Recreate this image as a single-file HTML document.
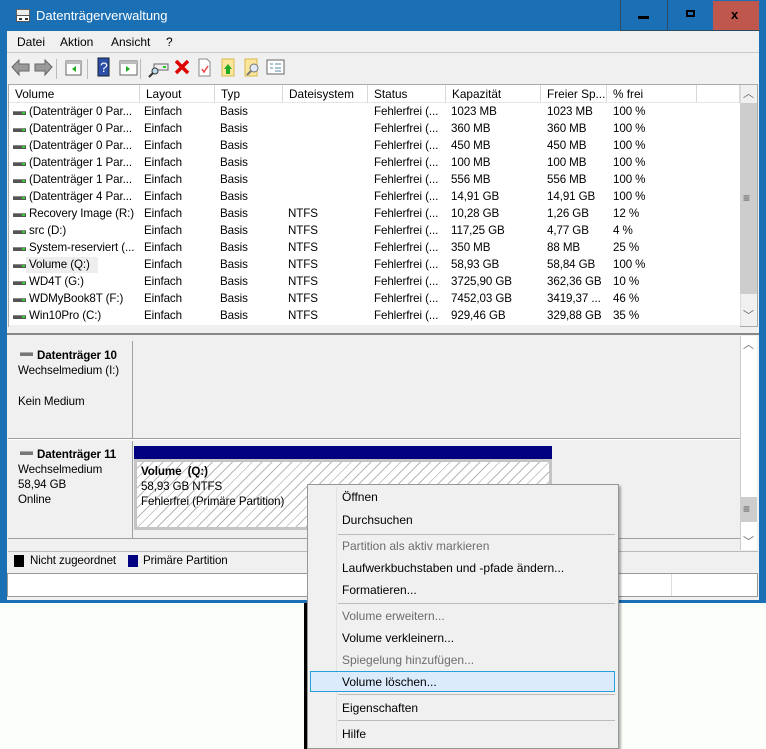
<!DOCTYPE html>
<html><head><meta charset="utf-8"><style>
*{margin:0;padding:0;box-sizing:border-box}
body{width:766px;height:749px;position:relative;background:#fcfefb;font-family:"Liberation Sans",sans-serif;font-size:12px;color:#000;overflow:hidden}
.a{position:absolute}
.t{position:absolute;white-space:nowrap;line-height:14px}
.r{font-size:11.6px;letter-spacing:-0.1px}
.hd{position:absolute;top:85px;height:18px;background:#fff;border-right:1px solid #d8d8d8;border-left:1px solid #fff;padding-left:5px;line-height:18px;border-bottom:1px solid #e5e5e5;overflow:hidden;white-space:nowrap;font-size:11.8px}
.di{position:absolute;width:13px;height:4px;background:#555;border-top:1px solid #888}
.di:after{content:"";position:absolute;right:1px;top:0;width:3px;height:2px;background:#3c3}
.mi{position:absolute;left:342px;font-size:12px}
.dis{color:#6d6d6d}
.sep{position:absolute;left:338px;width:277px;height:1px;background:#bcbcbc}
</style></head><body>
<div class="a" style="left:0;top:0;width:766px;height:603px;background:#1a6fb5"></div>
<div class="a" style="left:620px;top:0;width:46px;height:31px;border-left:1px solid #2d4a63"></div>
<div class="a" style="left:667px;top:0;width:46px;height:31px;border-left:1px solid #2d4a63"></div>
<div class="a" style="left:713px;top:1px;width:46px;height:29px;background:#c0574f"></div>
<div class="a" style="left:620px;top:30px;width:140px;height:1px;background:#2d4a63"></div>
<div class="a" style="left:638px;top:16px;width:11px;height:3px;background:#000"></div>
<div class="a" style="left:686px;top:10px;width:9px;height:7px;border:2px solid #000"></div>
<div class="t" style="left:731px;top:8px;font-weight:bold;font-size:13px">x</div>
<div class="a" style="left:16px;top:9px;width:14px;height:7px;background:#eee;border:1px solid #666"></div>
<div class="a" style="left:16px;top:15px;width:14px;height:7px;background:#fff;border:1px solid #555"></div>
<div class="a" style="left:19px;top:18px;width:3px;height:2px;background:#333"></div>
<div class="a" style="left:25px;top:18px;width:3px;height:2px;background:#333"></div>
<div class="t" style="left:36px;top:9px;color:#fff;font-size:13px">Datenträgerverwaltung</div>
<div class="a" style="left:7px;top:31px;width:752px;height:569px;background:#f0f0f0"></div>
<div class="t" style="left:17px;top:35px">Datei</div>
<div class="t" style="left:60px;top:35px">Aktion</div>
<div class="t" style="left:111px;top:35px">Ansicht</div>
<div class="t" style="left:166px;top:35px">?</div>
<div class="a" style="left:7px;top:52px;width:752px;height:1px;background:#c9c9c9"></div>
<svg class="a" style="left:10px;top:55px" width="290" height="26">
<path d="M2 12 L9 5 L9 9 L19 9 L19 16 L9 16 L9 20 Z" fill="#9a9a9a" stroke="#666"/>
<path d="M42 12 L35 5 L35 9 L25 9 L25 16 L35 16 L35 20 Z" fill="#9a9a9a" stroke="#666"/>
<rect x="46" y="4" width="1" height="20" fill="#bbb"/>
<rect x="56" y="6" width="15" height="14" fill="#fff" stroke="#666"/><rect x="56" y="6" width="15" height="3" fill="#bbb"/><path d="M66 11 L62 14 L66 17Z" fill="#2a2"/>
<rect x="77" y="4" width="1" height="20" fill="#bbb"/>
<rect x="88" y="3" width="11" height="18" fill="#2c4fa8" stroke="#123"/><text x="90" y="17" fill="#fff" font-size="14" font-family="Liberation Sans">?</text>
<rect x="110" y="6" width="17" height="14" fill="#fff" stroke="#666"/><rect x="110" y="6" width="17" height="3" fill="#bbb"/><path d="M116 11 L120 14 L116 17Z" fill="#2a2"/>
<rect x="130" y="4" width="1" height="20" fill="#bbb"/>
<rect x="144" y="9" width="14" height="6" fill="#eee" stroke="#666"/><rect x="153" y="11" width="3" height="2" fill="#2c2"/><circle cx="145" cy="16" r="3" fill="#bde" stroke="#333"/><path d="M143 18 L139 22" stroke="#333" stroke-width="2"/>
<path d="M166 6 L178 18 M178 6 L166 18" stroke="#d00" stroke-width="3.5"/>
<path d="M189 4 L197 4 L200 7 L200 21 L189 21 Z" fill="#fff" stroke="#888"/><path d="M192 14 L194 17 L198 11" stroke="#e44" fill="none" stroke-width="1.5"/>
<rect x="212" y="4" width="12" height="17" fill="#fbe79c" stroke="#d8b84a"/><path d="M218 9 L222 14 L220 14 L220 19 L216 19 L216 14 L214 14Z" fill="#2a2"/>
<rect x="235" y="4" width="12" height="17" fill="#fbe79c" stroke="#d8b84a"/><circle cx="244" cy="13" r="4" fill="#dfeaf5" stroke="#777"/><path d="M241 16 L237 20" stroke="#777" stroke-width="2"/>
<rect x="257" y="5" width="17" height="14" fill="#fff" stroke="#666"/><path d="M260 9h3M260 13h3M265 9h6M265 13h6M265 16h6" stroke="#58a"/>
</svg>
<div class="a" style="left:8px;top:84px;width:750px;height:243px;background:#fff;border:1px solid #aaa"></div>
<div class="hd" style="left:9px;width:131px">Volume</div>
<div class="hd" style="left:140px;width:75px">Layout</div>
<div class="hd" style="left:215px;width:68px">Typ</div>
<div class="hd" style="left:283px;width:85px">Dateisystem</div>
<div class="hd" style="left:368px;width:78px">Status</div>
<div class="hd" style="left:446px;width:95px">Kapazität</div>
<div class="hd" style="left:541px;width:66px">Freier Sp...</div>
<div class="hd" style="left:607px;width:90px">% frei</div>
<div class="hd" style="left:697px;width:43px"></div>
<div class="a" style="left:740px;top:85px;width:17px;height:241px;background:#f0f0f0;border-left:1px solid #ddd"></div>
<div class="a" style="left:740px;top:103px;width:17px;height:191px;background:#cdcdcd"></div>
<div class="t" style="left:743px;top:191px;color:#555">≡</div>
<div class="t" style="left:743px;top:87px;color:#666;font-size:11px">︿</div>
<div class="t" style="left:743px;top:309px;color:#666;font-size:11px">﹀</div>
<div id="rows"></div>
<div class="a" style="left:9px;top:325px;width:731px;height:9px;background:#f0f0f0"></div>
<div class="a" style="left:7px;top:333px;width:752px;height:2px;background:#888"></div>
<div class="a" style="left:8px;top:336px;width:750px;height:215px;background:#f0f0f0"></div>
<div class="a" style="left:740px;top:336px;width:17px;height:214px;background:#fff;border-left:1px solid #ccc"></div>
<div class="a" style="left:740px;top:497px;width:17px;height:25px;background:#cdcdcd"></div>
<div class="t" style="left:743px;top:502px;color:#555">≡</div>
<div class="t" style="left:743px;top:338px;color:#666;font-size:11px">︿</div>
<div class="t" style="left:743px;top:535px;color:#666;font-size:11px">﹀</div>
<div class="a" style="left:132px;top:341px;width:1px;height:97px;background:#a0a0a0"></div>
<div class="a" style="left:8px;top:438px;width:732px;height:1px;background:#a0a0a0"></div>
<div class="a" style="left:8px;top:439px;width:732px;height:1px;background:#fff"></div>
<div class="a" style="left:132px;top:441px;width:1px;height:97px;background:#a0a0a0"></div>
<div class="a" style="left:8px;top:538px;width:732px;height:1px;background:#a0a0a0"></div>
<div class="a" style="left:20px;top:352px;width:13px;height:4px;background:#777;border-top:1px solid #aaa"></div>
<div class="t r" style="left:37px;top:349px;font-weight:bold">Datenträger 10</div>
<div class="t r" style="left:18px;top:364px">Wechselmedium (I:)</div>
<div class="t r" style="left:18px;top:395px">Kein Medium</div>
<div class="a" style="left:20px;top:451px;width:13px;height:4px;background:#777;border-top:1px solid #aaa"></div>
<div class="t r" style="left:37px;top:448px;font-weight:bold">Datenträger 11</div>
<div class="t r" style="left:18px;top:463px">Wechselmedium</div>
<div class="t r" style="left:18px;top:478px">58,94 GB</div>
<div class="t r" style="left:18px;top:493px">Online</div>
<div class="a" style="left:134px;top:446px;width:418px;height:13px;background:#000080"></div>
<div class="a" style="left:134px;top:459px;width:418px;height:71px;border:3px solid #c4c4c4;background:#fff repeating-linear-gradient(135deg,#fff 0 4px,#b8b8b8 4px 5px,#fff 5px 7px)"></div>
<div class="t r" style="left:141px;top:465px;font-weight:bold">Volume&nbsp; (Q:)</div>
<div class="t r" style="left:141px;top:480px">58,93 GB NTFS</div>
<div class="t r" style="left:141px;top:495px">Fehlerfrei (Primäre Partition)</div>
<div class="a" style="left:8px;top:551px;width:750px;height:1px;background:#bbb"></div>
<div class="a" style="left:14px;top:555px;width:10px;height:12px;background:#000"></div>
<div class="t r" style="left:30px;top:554px">Nicht zugeordnet</div>
<div class="a" style="left:128px;top:555px;width:10px;height:12px;background:#000080"></div>
<div class="t r" style="left:143px;top:554px">Primäre Partition</div>
<div class="a" style="left:7px;top:573px;width:751px;height:24px;background:#fff;border:1px solid #999"></div>
<div class="a" style="left:671px;top:574px;width:1px;height:22px;background:#ddd"></div>
<div class="a" style="left:304px;top:603px;width:3px;height:146px;background:#000"></div>
<div class="a" style="left:307px;top:484px;width:312px;height:265px;background:#f0f0f0;border:1px solid #979797;box-shadow:2px 2px 2px rgba(0,0,0,.3)"></div>
<div class="a" style="left:336px;top:487px;width:1px;height:258px;background:#e2e2e2"></div>
<div class="mi" style="top:490px">Öffnen</div>
<div class="mi" style="top:513px">Durchsuchen</div>
<div class="sep" style="top:534px"></div>
<div class="mi dis" style="top:539px">Partition als aktiv markieren</div>
<div class="mi" style="top:561px">Laufwerkbuchstaben und -pfade ändern...</div>
<div class="mi" style="top:583px">Formatieren...</div>
<div class="sep" style="top:603px"></div>
<div class="mi dis" style="top:609px">Volume erweitern...</div>
<div class="mi" style="top:631px">Volume verkleinern...</div>
<div class="mi dis" style="top:653px">Spiegelung hinzufügen...</div>
<div class="a" style="left:310px;top:671px;width:305px;height:21px;background:#dcebfc;border:1px solid #26a0da"></div>
<div class="mi" style="top:675px">Volume löschen...</div>
<div class="sep" style="top:694px"></div>
<div class="mi" style="top:701px">Eigenschaften</div>
<div class="sep" style="top:720px"></div>
<div class="mi" style="top:727px">Hilfe</div>
<script>
var d=[["(Datenträger 0 Par...","","1023 MB","1023 MB","100 %"],["(Datenträger 0 Par...","","360 MB","360 MB","100 %"],["(Datenträger 0 Par...","","450 MB","450 MB","100 %"],["(Datenträger 1 Par...","","100 MB","100 MB","100 %"],["(Datenträger 1 Par...","","556 MB","556 MB","100 %"],["(Datenträger 4 Par...","","14,91 GB","14,91 GB","100 %"],["Recovery Image (R:)","NTFS","10,28 GB","1,26 GB","12 %"],["src (D:)","NTFS","117,25 GB","4,77 GB","4 %"],["System-reserviert (...","NTFS","350 MB","88 MB","25 %"],["Volume (Q:)","NTFS","58,93 GB","58,84 GB","100 %"],["WD4T (G:)","NTFS","3725,90 GB","362,36 GB","10 %"],["WDMyBook8T (F:)","NTFS","7452,03 GB","3419,37 ...","46 %"],["Win10Pro (C:)","NTFS","929,46 GB","329,88 GB","35 %"]];
var h="";
d.forEach(function(r,i){var y=105+i*17;
if(i==9)h+='<div class="a" style="left:26px;top:'+(y-1)+'px;width:72px;height:16px;background:#eee"></div>';
h+='<div class="di" style="left:13px;top:'+(y+6)+'px"></div>';
h+='<div class="t r" style="left:29px;top:'+y+'px">'+r[0]+'</div>';
h+='<div class="t r" style="left:144px;top:'+y+'px">Einfach</div>';
h+='<div class="t r" style="left:220px;top:'+y+'px">Basis</div>';
h+='<div class="t r" style="left:288px;top:'+y+'px">'+r[1]+'</div>';
h+='<div class="t r" style="left:374px;top:'+y+'px">Fehlerfrei (...</div>';
h+='<div class="t r" style="left:451px;top:'+y+'px">'+r[2]+'</div>';
h+='<div class="t r" style="left:547px;top:'+y+'px">'+r[3]+'</div>';
h+='<div class="t r" style="left:613px;top:'+y+'px">'+r[4]+'</div>';});
document.getElementById("rows").innerHTML=h;
</script>
</body></html>
